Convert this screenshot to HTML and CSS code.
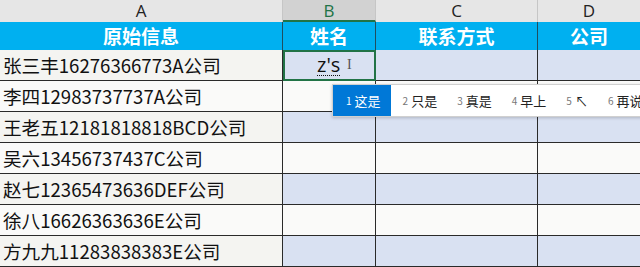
FILE: index.html
```html
<!DOCTYPE html>
<html lang="zh">
<head>
    <meta charset="UTF-8">
    <title>表格</title>
    <link rel="stylesheet" href="styles.css">
</head>
<body>
    <div class="sheet">
        <div class="col-head">A</div>
        <div class="col-head active">B</div>
        <div class="col-head">C</div>
        <div class="col-head last">D</div>

        <div class="title">原始信息</div>
        <div class="title">姓名</div>
        <div class="title">联系方式</div>
        <div class="title last">公司</div>

        <div class="cell a band">张三丰16276366773A公司</div>
        <div class="cell band editing"><span class="ime">z's</span><span class="caret">I</span></div>
        <div class="cell band"></div>
        <div class="cell band last"></div>

        <div class="cell a">李四12983737737A公司</div>
        <div class="cell"></div>
        <div class="cell"></div>
        <div class="cell last"></div>

        <div class="cell a band">王老五12181818818BCD公司</div>
        <div class="cell band"></div>
        <div class="cell band"></div>
        <div class="cell band last"></div>

        <div class="cell a">吴六13456737437C公司</div>
        <div class="cell"></div>
        <div class="cell"></div>
        <div class="cell last"></div>

        <div class="cell a band">赵七12365473636DEF公司</div>
        <div class="cell band"></div>
        <div class="cell band"></div>
        <div class="cell band last"></div>

        <div class="cell a">徐八16626363636E公司</div>
        <div class="cell"></div>
        <div class="cell"></div>
        <div class="cell last"></div>

        <div class="cell a band">方九九11283838383E公司</div>
        <div class="cell band"></div>
        <div class="cell band"></div>
        <div class="cell band last"></div>

        <div class="candidates">
            <span class="pick on"><i>1</i>这是</span>
            <span class="pick"><i>2</i>只是</span>
            <span class="pick"><i>3</i>真是</span>
            <span class="pick"><i>4</i>早上</span>
            <span class="pick"><i>5</i>↖</span>
            <span class="pick"><i>6</i>再说</span>
        </div>
    </div>
</body>
</html>
```

FILE: styles.css
```css
body {
    margin: 0;
    background-color: #fafaf9;
    font-family: 'Noto Sans CJK SC', 'Noto Sans', sans-serif;
    overflow: hidden;
}

.sheet {
    position: relative;
    display: grid;
    grid-template-columns: 283px 93px 162px 102px;
    grid-template-rows: 22px 28px repeat(7, 31px);
    width: 640px;
    overflow: hidden;
}

.col-head {
    background-color: #e6e6e6;
    border-right: 1px solid #c6c6c6;
    color: #222;
    font-family: 'Open Sans', sans-serif;
    font-size: 17px;
    line-height: 22px;
    text-align: center;
}

.col-head.active {
    background-color: #d2d2d2;
    color: #217346;
    border-bottom: 2px solid #217346;
    line-height: 21px;
}

.title {
    background-color: #00b0f0;
    border-right: 1px solid #1f4e5f;
    color: #ffffff;
    font-size: 19px;
    font-weight: bold;
    line-height: 28px;
    text-align: center;
}

.cell {
    border-right: 1px solid #2a2a2a;
    border-bottom: 1px solid #2a2a2a;
    background-color: #fafaf9;
}

.cell.band {
    background-color: #d9e1f2;
}

.cell.a {
    padding-left: 3px;
    font-size: 18.6px;
    line-height: 30px;
    color: #111;
    white-space: nowrap;
}

.cell.a.band {
    background-color: #f4f4f1;
}

.last {
    border-right: none;
}

.editing {
    outline: 2px solid #217346;
    outline-offset: -2px;
    display: flex;
    align-items: center;
    padding-left: 34px;
    position: relative;
}

.ime {
    font-family: 'Open Sans', sans-serif;
    font-size: 20px;
    color: #111;
    border-bottom: 1px dotted #111;
    line-height: 20px;
}

.caret {
    position: absolute;
    left: 64px;
    top: 7px;
    font-family: 'Liberation Serif', serif;
    font-size: 14px;
    color: #555;
}

.candidates {
    position: absolute;
    left: 332px;
    top: 84px;
    width: 320px;
    height: 31px;
    display: flex;
    background-color: #ffffff;
    border: 1px solid #d0d0d0;
    box-shadow: 0 1px 3px rgba(0, 0, 0, 0.2);
}

.pick {
    display: flex;
    align-items: center;
    padding: 0 8px 0 12px;
    font-size: 13px;
    color: #222;
    white-space: nowrap;
}

.pick i {
    font-style: normal;
    font-size: 10px;
    color: #777;
    margin-right: 3px;
}

.pick.on {
    background-color: #0078d7;
    color: #ffffff;
    padding: 0 10px 0 13px;
}

.pick.on i {
    color: #ffffff;
}
```
